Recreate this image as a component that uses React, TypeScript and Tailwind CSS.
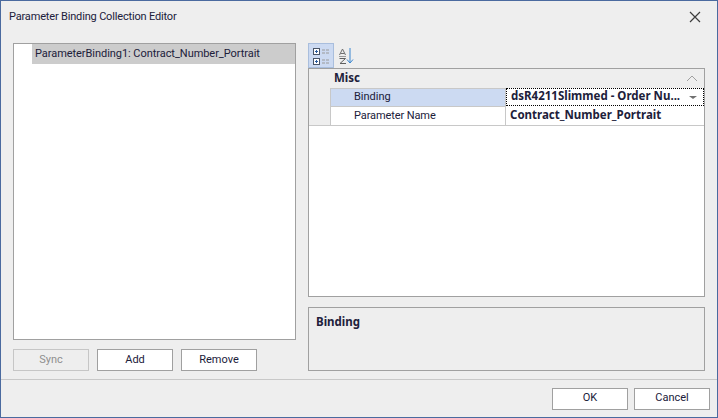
const boldFont = 'font-["Noto_Sans",sans-serif] font-bold text-[11.5px]'

function Button({ label, disabled }: { label: string; disabled?: boolean }) {
  return (
    <button
      className={
        disabled
          ? 'h-[22px] w-[76px] border border-[#c6c6c6] bg-[#eeeeee] text-[#8f8f8f]'
          : 'h-[22px] w-[76px] border border-[#a0a0a0] bg-white text-[#20203a]'
      }
    >
      {label}
    </button>
  )
}

function CategorizedIcon() {
  return (
    <svg width="18" height="18" viewBox="0 0 18 18" fill="none">
      <rect x="1.5" y="1.5" width="6" height="6" fill="#fff" stroke="#4a5568" />
      <rect x="1.5" y="11.5" width="6" height="6" fill="#fff" stroke="#4a5568" />
      <path d="M3 4.5h3M4.5 3v3M3 14.5h3M4.5 13v3" stroke="#2b5c9e" />
      <path d="M10 3h3M14 3h3M10 6h3M14 6h3M10 13h3M14 13h3M10 16h3M14 16h3" stroke="#9a9a9a" />
    </svg>
  )
}

function SortIcon() {
  return (
    <svg width="18" height="18" viewBox="0 0 18 18" fill="none">
      <path d="M1.5 8 4.5 2 7.5 8M2.5 6.5h4" stroke="#6f6f6f" />
      <path d="M1 9.5h7" stroke="#9a9a9a" />
      <path d="M1.5 11.5h6L2 16.5h6" stroke="#5f5f5f" />
      <path d="M12 1v15M9 12.5l3 3.5 3-3.5" stroke="#3a86d0" />
    </svg>
  )
}

export default function App() {
  return (
    <div className='flex h-[418px] w-[718px] flex-col border border-[#4a6a9f] bg-[#eeeeee] font-["Roboto",sans-serif] text-[11px] text-[#20203a]'>
      <div className="flex h-[33px] items-center justify-between pb-[1px] pl-2 pr-[16px]">
        <span className="tracking-[-0.17px]">Parameter Binding Collection Editor</span>
        <svg width="12" height="12" viewBox="0 0 12 12" stroke="#3c3c3c" strokeWidth="1.2">
          <path d="M1 1l10 10M11 1 1 11" />
        </svg>
      </div>
      <div className="flex h-[346px] gap-3 border-b border-[#c8c8c8] pl-3 pr-3 pt-[9px]">
        <div className="flex w-[283px] flex-col">
          <div className="h-[297px] border border-[#a0a0a0] bg-white">
            <div className="ml-[18px] flex h-5 items-center bg-[#cccccc] pl-[3px] pt-[1px] tracking-[-0.05px]">
              ParameterBinding1: Contract_Number_Portrait
            </div>
          </div>
          <div className="mt-[9px] flex gap-2">
            <Button label="Sync" disabled />
            <Button label="Add" />
            <Button label="Remove" />
          </div>
        </div>
        <div className="flex w-[397px] flex-col">
          <div className="flex h-[25px] items-start">
            <div className="flex h-[25px] w-[26px] items-center justify-center border border-[#a9bedd] bg-[#ccdaf2]">
              <CategorizedIcon />
            </div>
            <div className="flex h-[25px] w-[26px] items-center justify-center">
              <SortIcon />
            </div>
          </div>
          <div className="h-[229px] border border-[#a0a0a0] bg-white">
            <div className="flex h-[19px] items-center justify-between bg-[#eeeeee] pl-[25px] pr-[6px]">
              <span className={`pb-[2px] ${boldFont}`}>Misc</span>
              <svg width="12" height="7" viewBox="0 0 12 7" fill="none" stroke="#a0a0a0">
                <path d="M1 6 6 1l5 5" />
              </svg>
            </div>
            <div className="flex h-[18px] bg-[#eeeeee] pl-[21px]">
              <div className="flex w-[176px] items-center border-x border-t border-[#c8c8c8] bg-[#ccdaf2] pb-[1px] pl-[23px]">Binding</div>
              <div className={`flex flex-1 items-center justify-between border border-dotted border-black bg-white pl-1 pr-[6px] ${boldFont}`}>
                <span className="pb-[2px]">dsR4211Slimmed - Order Nu...</span>
                <span className="h-0 w-0 border-x-[4px] border-t-[3px] border-x-transparent border-t-[#707070]" />
              </div>
            </div>
            <div className="flex h-[20px] border-b border-[#c8c8c8] bg-[#eeeeee] pl-[21px]">
              <div className="flex w-[176px] items-center border-x border-t border-[#c8c8c8] bg-white pl-[23px] tracking-[-0.1px]">Parameter Name</div>
              <div className={`flex flex-1 items-center bg-white pb-[2px] pl-1 ${boldFont}`}>Contract_Number_Portrait</div>
            </div>
          </div>
          <div className="mt-[10px] h-[64px] border border-[#a0a0a0] px-[7px] pt-[5px]">
            <span className={boldFont}>Binding</span>
          </div>
        </div>
      </div>
      <div className="flex flex-1 items-center justify-end gap-[6px] pr-[7px]">
        <Button label="OK" />
        <Button label="Cancel" />
      </div>
    </div>
  )
}
